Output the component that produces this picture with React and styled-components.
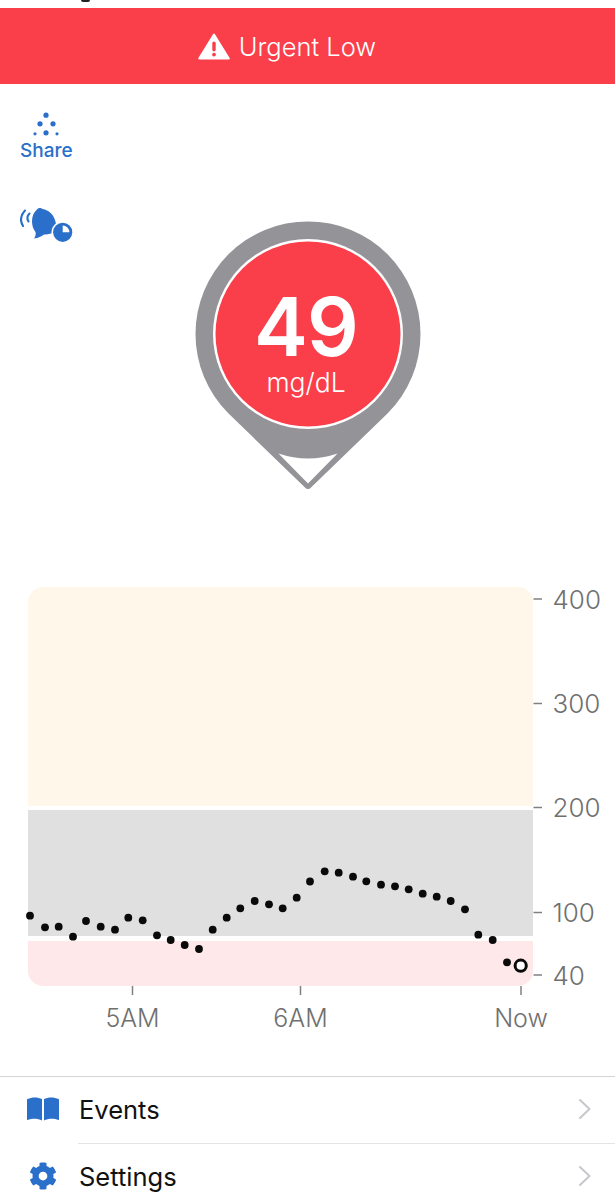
import React from "react"
import styled, { createGlobalStyle } from "styled-components"
import { FaCog } from "react-icons/fa"

const BLUE = "#2a6fc9"
const RED = "#fa3f4b"

// [x, y] in page pixels for the sensor readings
const readings = [
  [30, 915.7], [45, 927.3], [58.7, 926.7], [73, 936.7], [86, 921], [100.7, 926.7], [115, 929.7],
  [128.3, 917.7], [142.7, 920.3], [157, 935.3], [170.7, 940], [184.7, 945], [199, 949],
  [212.7, 929.7], [226.7, 917.7], [240.3, 908.3], [254.7, 901], [269, 904.3], [282.7, 908.3],
  [296.7, 897.7], [310, 881.5], [324.7, 871.3], [338.7, 872.7], [353, 876.7], [366.3, 881.3],
  [381, 884.7], [395, 886.3], [408.7, 889.3], [422.7, 893.7], [436.7, 896.7], [450.7, 901],
  [465, 909.3], [478.3, 934.7], [492.7, 940], [507, 962.3],
]

const yTicks = [
  { label: "400", y: 599 },
  { label: "300", y: 703.5 },
  { label: "200", y: 807.5 },
  { label: "100", y: 912.5 },
  { label: "40", y: 975 },
]

const xTicks = [
  { label: "5AM", x: 132.5 },
  { label: "6AM", x: 300.5 },
  { label: "Now", x: 521 },
]

const GlobalStyle = createGlobalStyle`
  html, body {
    margin: 0;
    padding: 0;
    background: #fff;
  }
`

const Page = styled.div`
  width: 615px;
  height: 1200px;
  overflow: hidden;
  background: #fff;
  font-family: Inter, "Liberation Sans", sans-serif;
`

const StatusStrip = styled.div`
  height: 8px;
  padding-left: 81px;
`

// tail of the status bar text that pokes out under the top edge
const StatusTail = styled.div`
  width: 9px;
  height: 2px;
  border-radius: 0 0 5px 5px;
  background: #222;
`

const Banner = styled.div`
  height: 76px;
  display: flex;
  align-items: center;
  justify-content: center;
  gap: 9px;
  padding-right: 41px;
  box-sizing: border-box;
  background: ${RED};
  color: #fff;
  font-size: 25.5px;
  font-weight: 300;
`

const Main = styled.main`
  height: 496px;
  display: grid;
  grid-template-columns: 1fr 226px 1fr;
`

const Rail = styled.div`
  display: flex;
  flex-direction: column;
  align-items: flex-start;
  gap: 44px;
  padding: 27.5px 0 0 20px;
`

const ShareButton = styled.div`
  display: flex;
  flex-direction: column;
  align-items: center;
  gap: 3.5px;
  color: ${BLUE};
  font-size: 19px;
  font-weight: 500;
  line-height: 22px;
`

const Pin = styled.div`
  position: relative;
  width: 226px;
  height: 272px;
  margin-top: 137px;
`

const PinShape = styled.svg`
  position: absolute;
  inset: 0;
`

const PinReading = styled.div`
  position: relative;
  display: flex;
  flex-direction: column;
  align-items: center;
  padding: 70.5px 3px 0 0;
  color: #fff;
`

const Value = styled.div`
  font-size: 81px;
  font-weight: 600;
  line-height: 70px;
  letter-spacing: -1px;
`

const Unit = styled.div`
  margin-top: 5.5px;
  font-size: 26.5px;
  font-weight: 300;
  line-height: 30px;
`

const Chart = styled.svg`
  display: block;
  width: 615px;
  height: 460px;
`

const AxisLabel = styled.text`
  font-family: Inter, "Liberation Sans", sans-serif;
  font-size: ${(p) => p.$size}px;
  font-weight: 300;
  fill: #707070;
`

const Menu = styled.nav`
  margin-top: 36px;
  border-top: 1px solid #d4d4d4;
`

const MenuRow = styled.div`
  height: 66px;
  display: flex;
  align-items: center;
  padding-bottom: 1.5px;
  box-sizing: border-box;
`

const MenuIcon = styled.div`
  width: 79px;
  flex: none;
  display: flex;
  justify-content: center;
  padding-left: 6px;
  box-sizing: border-box;
  color: ${BLUE};
`

const MenuLabel = styled.div`
  flex: 1;
  font-size: 25.5px;
  color: #111;
`

const Chevron = styled.svg`
  flex: none;
  margin-right: 23px;
`

const MenuDivider = styled.div`
  height: 1px;
  margin-left: 78px;
  background: #e4e4e4;
`

const WarningIcon = () => (
  <svg width="32" height="27" viewBox="0 0 32 27">
    <path
      d="M16 1.5 L30.8 25.5 H1.2 Z"
      fill="#fff"
      stroke="#fff"
      strokeWidth="2"
      strokeLinejoin="round"
    />
    <rect x="14.3" y="8.5" width="3.4" height="10" rx="1.7" fill={RED} />
    <circle cx="16" cy="21.6" r="1.9" fill={RED} />
  </svg>
)

const ShareIcon = () => (
  <svg width="26" height="25" viewBox="0 0 26 25" fill={BLUE}>
    <circle cx="13" cy="3.2" r="2.6" />
    <circle cx="7" cy="11.8" r="2.6" />
    <circle cx="20" cy="11.8" r="2.6" />
    <circle cx="13" cy="20.8" r="2.6" />
    <circle cx="2" cy="21.8" r="1.6" />
    <circle cx="24" cy="21.8" r="1.6" />
  </svg>
)

// bell leaning left with sound arcs, and a clock badge in the corner
const AlertScheduleIcon = () => (
  <svg width="54" height="38" viewBox="0 0 54 38" fill="none">
    <path d="M5 4.5 C0 10 0 15 3 20" stroke={BLUE} strokeWidth="2.1" strokeLinecap="round" />
    <path d="M9.5 7.5 C7 10 7 13 8.5 15.5" stroke={BLUE} strokeWidth="2.1" strokeLinecap="round" />
    <path
      d="M17 3.5 C18 2 21 1.5 22.5 3 C29 4 33.5 9 35 14 C36 18 37 20 39 23 C35 27 29 28.5 24 28.5 C22 30 18 32 14 32.5 C15.5 30.5 16 28.5 15.5 26 C13 23 12 19 12 15 C12 10 14 6 17 3.5 Z"
      fill={BLUE}
    />
    <circle cx="42.7" cy="26.3" r="11.2" fill="#fff" />
    <circle cx="42.7" cy="26.3" r="9.6" fill={BLUE} />
    <path d="M42.7 26.3 V19.6 A6.7 6.7 0 0 1 49.4 26.3 Z" fill="#fff" />
  </svg>
)

const BookIcon = () => (
  <svg width="32" height="24" viewBox="0 0 32 24" fill="currentColor">
    <path d="M0.5 2 C5 -0.2 11 0 15 2 V23.5 C11 21.2 5 21 0.5 23 C0.2 23.2 0 23 0 22.6 V2.6 C0 2.3 0.2 2.1 0.5 2 Z" />
    <path d="M31.5 2 C27 -0.2 21 0 17 2 V23.5 C21 21.2 27 21 31.5 23 C31.8 23.2 32 23 32 22.6 V2.6 C32 2.3 31.8 2.1 31.5 2 Z" />
  </svg>
)

const ChevronRight = () => (
  <Chevron width="14" height="22" viewBox="0 0 14 22" fill="none">
    <path d="M2 2 L11.5 11 L2 20" stroke="#c7c7cc" strokeWidth="2" strokeLinecap="round" strokeLinejoin="round" />
  </Chevron>
)

const GlucosePin = () => (
  <Pin>
    <PinShape width="226" height="272" viewBox="0 0 226 272">
      <path
        d="M33.5 192.5 A112.5 112.5 0 1 1 192.5 192.5 L116 266.5 Q113 269.5 110 266.5 Z"
        fill="#949498"
      />
      <circle cx="113" cy="113" r="95" fill="#fff" />
      <circle cx="113" cy="113" r="92.5" fill={RED} />
      <path d="M83.5 232.5 Q113 242.5 142.5 232.5 L113 262.5 Z" fill="#fff" />
    </PinShape>
    <PinReading>
      <Value>49</Value>
      <Unit>mg/dL</Unit>
    </PinReading>
  </Pin>
)

const GlucoseChart = () => (
  <Chart viewBox="0 580 615 460">
    <defs>
      <clipPath id="plotArea">
        <rect x="28" y="587" width="505" height="399" rx="15" />
      </clipPath>
    </defs>
    <g clipPath="url(#plotArea)">
      <rect x="28" y="587" width="505" height="219" fill="#fff7ea" />
      <rect x="28" y="810" width="505" height="126" fill="#e0e0e0" />
      <rect x="28" y="941" width="505" height="45" fill="#fee8ea" />
    </g>
    {yTicks.map((t) => (
      <g key={t.label}>
        <line x1="533.5" x2="542" y1={t.y} y2={t.y} stroke="#808080" strokeWidth="1.5" />
        <AxisLabel x="552.5" y={t.y + 9.5} $size={26}>{t.label}</AxisLabel>
      </g>
    ))}
    {xTicks.map((t) => (
      <g key={t.label}>
        <line x1={t.x} x2={t.x} y1="986" y2="995" stroke="#808080" strokeWidth="1.5" />
        <AxisLabel x={t.x} y="1027" textAnchor="middle" $size={25}>{t.label}</AxisLabel>
      </g>
    ))}
    {readings.map(([x, y]) => (
      <circle key={x} cx={x} cy={y} r="3.9" fill="#0a0a0a" />
    ))}
    <circle cx="520.7" cy="965.7" r="5.6" fill="#fff" stroke="#0a0a0a" strokeWidth="3" />
  </Chart>
)

export default function App() {
  return (
    <Page>
      <GlobalStyle />
      <StatusStrip>
        <StatusTail />
      </StatusStrip>
      <Banner>
        <WarningIcon />
        <span>Urgent Low</span>
      </Banner>
      <Main>
        <Rail>
          <ShareButton>
            <ShareIcon />
            Share
          </ShareButton>
          <AlertScheduleIcon />
        </Rail>
        <GlucosePin />
      </Main>
      <GlucoseChart />
      <Menu>
        <MenuRow>
          <MenuIcon><BookIcon /></MenuIcon>
          <MenuLabel>Events</MenuLabel>
          <ChevronRight />
        </MenuRow>
        <MenuDivider />
        <MenuRow>
          <MenuIcon><FaCog size={28} /></MenuIcon>
          <MenuLabel>Settings</MenuLabel>
          <ChevronRight />
        </MenuRow>
      </Menu>
    </Page>
  )
}
